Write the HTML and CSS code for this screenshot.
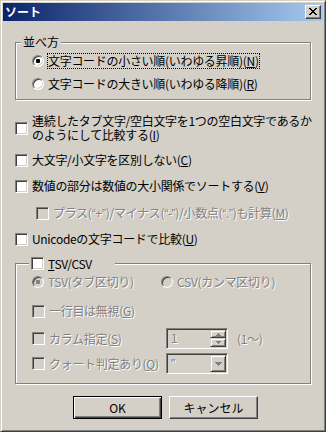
FILE: index.html
```html
<!DOCTYPE html>
<html lang="ja">
<head>
<meta charset="utf-8">
<title>ソート</title>
<link rel="stylesheet" href="styles.css">
</head>
<body>
<div class="window">
  <div class="titlebar">
    <span class="title">ソート</span>
    <span class="close-btn">
      <svg width="8" height="7" viewBox="0 0 8 7"><path d="M0 0h2v1H0zM6 0h2v1H6zM1 1h2v1H1zM5 1h2v1H5zM2 2h4v1H2zM3 3h2v1H3zM2 4h4v1H2zM1 5h2v1H1zM5 5h2v1H5zM0 6h2v1H0zM6 6h2v1H6z" fill="#000"/></svg>
    </span>
  </div>
  <div class="client">
    <div class="group g-order">
      <span class="legend">並べ方</span>
      <div class="row">
        <span class="radio checked"></span>
        <span class="label focus">文字コードの小さい順(いわゆる昇順)(<u>N</u>)</span>
      </div>
      <div class="row row-r2">
        <span class="radio"></span>
        <span class="label">文字コードの大きい順(いわゆる降順)(<u>R</u>)</span>
      </div>
    </div>

    <div class="row row-multi">
      <span class="check"></span>
      <span class="label multi">連続したタブ文字/空白文字を1つの空白文字であるか<br>のようにして比較する(<u>I</u>)</span>
    </div>
    <div class="row row-c2">
      <span class="check"></span>
      <span class="label">大文字/小文字を区別しない(<u>C</u>)</span>
    </div>
    <div class="row row-c3">
      <span class="check"></span>
      <span class="label">数値の部分は数値の大小関係でソートする(<u>V</u>)</span>
    </div>
    <div class="row row-c4">
      <span class="check disabled"></span>
      <span class="label dis">プラス(<span class="q">“+”</span>)/マイナス(<span class="q">“-”</span>)/小数点(<span class="q">“.”</span>)も計算(<u>M</u>)</span>
    </div>
    <div class="row row-c5">
      <span class="check"></span>
      <span class="label">Unicodeの文字コードで比較(<u>U</u>)</span>
    </div>

    <div class="group g-tsv">
      <span class="legend legend-check">
        <span class="check"></span>
        <span class="label"><u>T</u>SV/CSV</span>
      </span>
      <div class="row">
        <span class="item item-tsv">
          <span class="radio checked disabled"></span>
          <span class="label dis">TSV(タブ区切り)</span>
        </span>
        <span class="item">
          <span class="radio disabled"></span>
          <span class="label dis">CSV(カンマ区切り)</span>
        </span>
      </div>
      <div class="row row-t2">
        <span class="check disabled"></span>
        <span class="label dis">一行目は無視(<u>G</u>)</span>
      </div>
      <div class="row row-field row-t3">
        <span class="item item-field">
          <span class="check disabled"></span>
          <span class="label dis">カラム指定(<u>S</u>)</span>
        </span>
        <span class="field">
          <span class="field-val dis">1</span>
          <span class="spin-btns">
            <span class="sbtn up"><svg width="5" height="3" viewBox="0 0 5 3"><path d="M2 0h1v1h1v1h1v1H0V2h1V1h1z" fill="#808080"/></svg></span>
            <span class="sbtn down"><svg width="5" height="3" viewBox="0 0 5 3"><path d="M0 0h5v1H4v1H3v1H2V2H1V1H0z" fill="#808080"/></svg></span>
          </span>
        </span>
        <span class="label dis range">(1～)</span>
      </div>
      <div class="row row-field row-t4">
        <span class="item item-field">
          <span class="check disabled"></span>
          <span class="label dis">クォート判定あり(<u>Q</u>)</span>
        </span>
        <span class="field">
          <span class="field-val dis"><span class="q">"</span></span>
          <span class="drop-btn"><svg width="7" height="4" viewBox="0 0 7 4"><path d="M0 0h7v1H6v1H5v1H4v1H3V3H2V2H1V1H0z" fill="#808080"/></svg></span>
        </span>
      </div>
    </div>

    <div class="buttons">
      <span class="btn btn-default">OK</span>
      <span class="btn">キャンセル</span>
    </div>
  </div>
</div>
</body>
</html>
```

FILE: styles.css
```css
* { box-sizing: border-box; }
html, body { margin: 0; padding: 0; }
body {
  width: 326px;
  height: 432px;
  background: #d4d0c8;
  font-family: "Noto Sans CJK JP", sans-serif;
  font-size: 12px;
  color: #000;
  overflow: hidden;
}
.window {
  width: 326px;
  height: 432px;
  background: #d4d0c8;
  border: 1px solid;
  border-color: #d4d0c8 #404040 #404040 #d4d0c8;
  box-shadow: inset 1px 1px 0 #fff, inset -1px -1px 0 #808080;
  padding: 2px;
  display: flex;
  flex-direction: column;
}
.titlebar {
  height: 18px;
  flex: none;
  display: flex;
  align-items: center;
  justify-content: space-between;
  padding: 0 2px 0 2px;
  background: linear-gradient(to right, #0a246a, #a6caf0);
}
.title {
  color: #fff;
  font-weight: bold;
  line-height: 18px;
}
.close-btn {
  width: 16px;
  height: 14px;
  background: #d4d0c8;
  border: 1px solid;
  border-color: #fff #404040 #404040 #fff;
  box-shadow: inset -1px -1px 0 #808080;
  display: flex;
  align-items: flex-start;
  padding: 2px 0 0 3px;
}
.close-btn svg { display: block; }
.client {
  flex: 1;
  display: flex;
  flex-direction: column;
  padding: 0 12px;
}
.group {
  position: relative;
  flex: none;
  border: 1px solid #808080;
  box-shadow: inset 1px 1px 0 #fff, 1px 1px 0 #fff;
  display: flex;
  flex-direction: column;
  padding: 10px 0 0 16px;
}
.g-order { margin-top: 21px; height: 58px; }
.g-tsv { margin-top: 16px; height: 121px; }
.legend {
  position: absolute;
  top: -8px;
  left: 5px;
  padding: 0 2px;
  background: #d4d0c8;
  line-height: 14px;
}
.legend-check {
  top: -7px;
  left: 13px;
  width: 86px;
  height: 13px;
  display: flex;
  align-items: center;
  gap: 4px;
}
.row {
  display: flex;
  align-items: center;
  height: 16px;
  gap: 4px;
  flex: none;
}
.row-r2 { margin-top: 7px; }
.row-multi { margin-top: 14px; height: 28px; }
.row-c2 { margin-top: 10px; }
.row-c3 { margin-top: 10px; }
.row-c4 { margin-top: 11px; padding-left: 21px; }
.row-c5 { margin-top: 10px; }
.row-t2 { margin-top: 13px; }
.row-field { height: 21px; gap: 0; }
.row-t3 { margin-top: 9px; }
.row-t4 { margin-top: 4px; }
.item {
  display: flex;
  align-items: center;
  gap: 4px;
}
.item-tsv { width: 125px; }
.item-field { width: 134px; }
.label {
  white-space: nowrap;
  line-height: 14px;
  letter-spacing: -0.3px;
}
.label.multi { line-height: 14px; }
.focus { outline: 1px dotted #000; }
.dis { color: #808080; text-shadow: 1px 1px 0 #fff; }
.q { font-family: "Liberation Sans", sans-serif; }
.range { margin-left: 9px; }
.check {
  width: 13px;
  height: 13px;
  flex: none;
  background: #fff;
  border: 1px solid;
  border-color: #808080 #fff #fff #808080;
  box-shadow: inset 1px 1px 0 #404040, inset -1px -1px 0 #d4d0c8;
}
.check.disabled { background: #d4d0c8; }
.radio {
  width: 12px;
  height: 12px;
  flex: none;
  border-radius: 50%;
  background: #fff;
  border: 1px solid;
  border-color: #808080 #fff #fff #808080;
  box-shadow: inset 1px 1px 0 #404040, inset -1px -1px 0 #d4d0c8;
  display: flex;
  align-items: center;
  justify-content: center;
}
.radio.disabled { background: #d4d0c8; }
.radio.checked::after {
  content: "";
  width: 4px;
  height: 4px;
  border-radius: 1px;
  background: #000;
}
.radio.checked.disabled::after { background: #808080; }
.field {
  width: 62px;
  height: 21px;
  flex: none;
  display: flex;
  padding: 1px;
  background: #d4d0c8;
  border: 1px solid;
  border-color: #808080 #fff #fff #808080;
  box-shadow: inset 1px 1px 0 #404040, inset -1px -1px 0 #d4d0c8;
}
.field-val {
  flex: 1;
  padding-left: 3px;
  line-height: 15px;
}
.spin-btns {
  width: 16px;
  display: flex;
  flex-direction: column;
}
.sbtn, .drop-btn {
  border: 1px solid;
  border-color: #d4d0c8 #404040 #404040 #d4d0c8;
  box-shadow: inset 1px 1px 0 #fff, inset -1px -1px 0 #808080;
  display: flex;
  align-items: center;
  justify-content: center;
  background: #d4d0c8;
}
.sbtn.up { height: 8px; }
.sbtn.down { height: 9px; }
.drop-btn { width: 16px; height: 17px; }
.sbtn svg, .drop-btn svg { display: block; }
.buttons {
  margin-top: 12px;
  height: 23px;
  display: flex;
  gap: 7px;
  padding-left: 58px;
  flex: none;
}
.btn {
  width: 89px;
  height: 23px;
  display: flex;
  align-items: center;
  justify-content: center;
  background: #d4d0c8;
  border: 1px solid;
  border-color: #fff #404040 #404040 #fff;
  box-shadow: inset -1px -1px 0 #808080;
  line-height: 14px;
}
.btn-default {
  border-color: #000;
  box-shadow: inset 1px 1px 0 #fff, inset -1px -1px 0 #404040, inset -2px -2px 0 #808080;
}
```
